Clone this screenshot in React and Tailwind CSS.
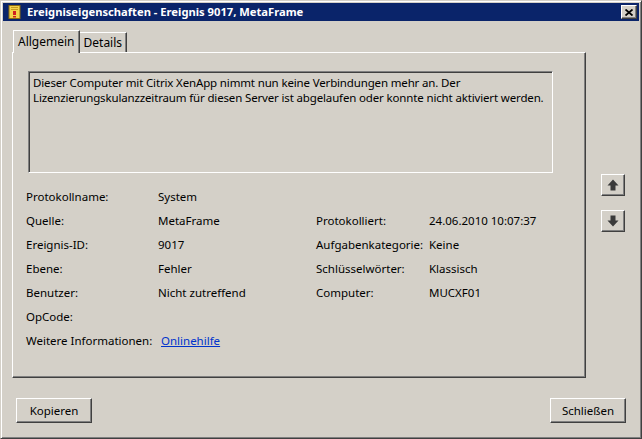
import React from "react";

const font = { fontFamily: '"Noto Sans", "Open Sans", sans-serif' };

function Btn3D({ className = "", children }) {
  return (
    <div
      className={
        "border border-t-white border-l-white border-r-[#404040] border-b-[#404040] shadow-[inset_-1px_-1px_0_#808080] bg-[#d4d0c8] flex items-center justify-center " +
        className
      }
    >
      {children}
    </div>
  );
}

function Arrow({ down }) {
  return (
    <svg width="12" height="12" viewBox="0 0 12 12" className={down ? "rotate-180" : ""}>
      <path d="M6 0.5 L11.5 6.5 L8.5 6.5 L8.5 11.5 L3.5 11.5 L3.5 6.5 L0.5 6.5 Z" fill="#3a3a3a" />
    </svg>
  );
}

export default function App() {
  const rows = [
    ["Protokollname:", "System", "", ""],
    ["Quelle:", "MetaFrame", "Protokolliert:", "24.06.2010 10:07:37"],
    ["Ereignis-ID:", "9017", "Aufgabenkategorie:", "Keine"],
    ["Ebene:", "Fehler", "Schlüsselwörter:", "Klassisch"],
    ["Benutzer:", "Nicht zutreffend", "Computer:", "MUCXF01"],
    ["OpCode:", "", "", ""],
  ];
  return (
    <div
      style={font}
      className="w-[642px] h-[439px] bg-[#d4d0c8] border border-t-[#d4d0c8] border-l-[#d4d0c8] border-r-[#404040] border-b-[#404040] shadow-[inset_1px_1px_0_white,inset_-1px_-1px_0_#808080] p-[2px] flex flex-col text-[11.5px] text-black overflow-hidden"
    >
      {/* Title bar */}
      <div className="h-[18px] bg-[#0a246a] flex items-center pl-[5px] pr-[2px] shrink-0">
        <svg width="14" height="14" viewBox="0 0 14 14" className="shrink-0">
          <rect x="1" y="0.5" width="11" height="13" fill="#f3d34a" stroke="#8a6a10" strokeWidth="1" />
          <rect x="3" y="2" width="7" height="1" fill="#c89a20" />
          <rect x="3" y="4" width="7" height="1" fill="#c89a20" />
          <rect x="5" y="6" width="3" height="4" fill="#d02020" />
          <rect x="5" y="11" width="3" height="1.5" fill="#d02020" />
        </svg>
        <span className="ml-[5px] text-white font-bold text-[11.2px] leading-none whitespace-nowrap">
          Ereigniseigenschaften - Ereignis 9017, MetaFrame
        </span>
        <div className="ml-auto">
          <Btn3D className="w-[16px] h-[14px]">
            <svg width="8" height="7" viewBox="0 0 8 7">
              <path d="M0.5 0.5 L7.5 6.5 M7.5 0.5 L0.5 6.5" stroke="black" strokeWidth="1.8" />
            </svg>
          </Btn3D>
        </div>
      </div>

      {/* Body */}
      <div className="flex pl-[9px] pt-[8px]">
        <div className="w-[574px] flex flex-col">
          {/* Tabs */}
          <div className="flex items-end h-[23px] pl-[1px] relative z-10">
            <div className="h-[23px] px-[4px] pt-[2px] border border-b-0 border-t-white border-l-white border-r-[#404040] shadow-[inset_-1px_0_0_#808080] bg-[#d4d0c8] flex items-start text-[12px] -mb-[1px]">
              Allgemein
            </div>
            <div className="h-[20px] px-[4px] pt-[1px] border border-b-0 border-t-white border-l-0 border-r-[#404040] shadow-[inset_-1px_0_0_#808080] bg-[#d4d0c8] flex items-start text-[12px]">
              Details
            </div>
          </div>
          {/* Panel */}
          <div className="h-[326px] border border-t-white border-l-white border-r-[#404040] border-b-[#404040] shadow-[inset_-1px_-1px_0_#808080] pl-[15px] pt-[18px]">
            <div className="w-[525px] h-[102px] border border-t-[#808080] border-l-[#808080] border-r-white border-b-white shadow-[inset_1px_1px_0_#404040] pl-[4px] pt-[3px] leading-[15px] whitespace-nowrap tracking-[-0.15px] overflow-hidden">
              Dieser Computer mit Citrix XenApp nimmt nun keine Verbindungen mehr an. Der
              <br />
              Lizenzierungskulanzzeitraum für diesen Server ist abgelaufen oder konnte nicht aktiviert werden.
            </div>
            <div className="-ml-[2px] mt-[12px] grid grid-cols-[132px_158px_113px_auto] auto-rows-[24px] items-center">
              {rows.map((r, i) => (
                <React.Fragment key={i}>
                  <div>{r[0]}</div>
                  <div>{r[1]}</div>
                  <div>{r[2]}</div>
                  <div>{r[3]}</div>
                </React.Fragment>
              ))}
              <div className="whitespace-nowrap">Weitere Informationen:</div>
              <div className="pl-[3px]">
                <span className="text-[#0033cc] underline">Onlinehilfe</span>
              </div>
            </div>
          </div>
        </div>
        {/* Arrow buttons */}
        <div className="flex flex-col ml-[15px] pt-[145px] gap-[14px]">
          <Btn3D className="w-[24px] h-[22px]">
            <Arrow />
          </Btn3D>
          <Btn3D className="w-[24px] h-[22px]">
            <Arrow down />
          </Btn3D>
        </div>
      </div>

      {/* Bottom buttons */}
      <div className="flex justify-between pl-[13px] pr-[13px] mt-[20px]">
        <Btn3D className="w-[76px] h-[25px]">Kopieren</Btn3D>
        <Btn3D className="w-[76px] h-[25px]">Schließen</Btn3D>
      </div>
    </div>
  );
}
